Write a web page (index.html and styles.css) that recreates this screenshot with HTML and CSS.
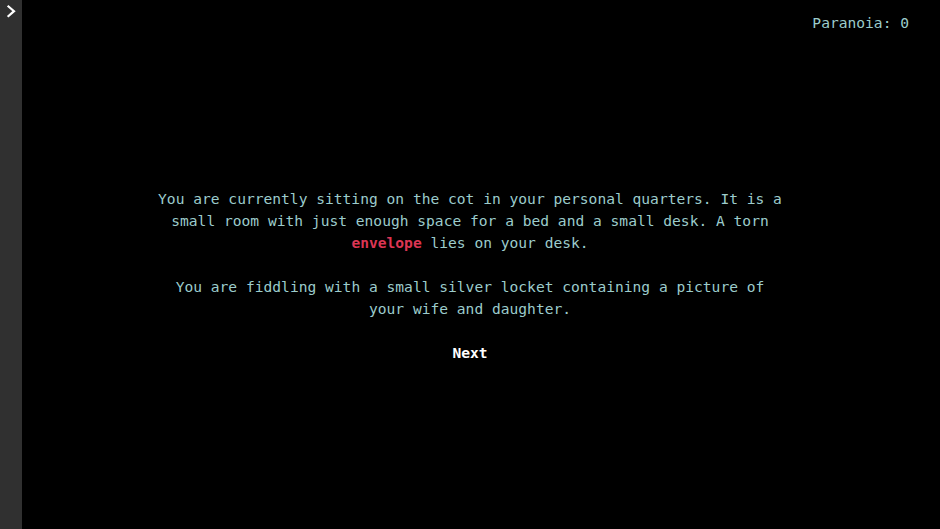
FILE: index.html
```html
<!DOCTYPE html>
<html>
<head>
<meta charset="utf-8">
<link rel="stylesheet" href="styles.css">
</head>
<body>
<aside class="sidebar"><svg class="chevron" width="22" height="22" viewBox="0 0 22 22"><polyline points="8.5,6.5 14,11.2 8.5,16" fill="none" stroke="#fff" stroke-width="2.2" stroke-linecap="square"/></svg></aside>
<main class="main">
  <header class="status">Paranoia: 0</header>
  <section class="story">
    <p>You are currently sitting on the cot in your personal quarters. It is a small room with just enough space for a bed and a small desk. A torn <span class="item">envelope</span> lies on your desk.</p>
    <p>You are fiddling with a small silver locket containing a picture of your wife and daughter.</p>
    <p class="next">Next</p>
  </section>
</main>
</body>
</html>
```
FILE: styles.css
```css
html, body {
  margin: 0;
  padding: 0;
  background: #000;
  height: 100%;
}
body {
  font-family: "DejaVu Sans Mono", "Liberation Mono", monospace;
  font-size: 14.6px;
  line-height: 22px;
  color: #9ccccc;
}
.sidebar {
  position: fixed;
  left: 0;
  top: 0;
  bottom: 0;
  width: 22px;
  background: #303030;
}
.chevron {
  display: block;
}
.main {
  display: flex;
  flex-direction: column;
  align-items: center;
}
.status {
  align-self: stretch;
  display: flex;
  justify-content: flex-end;
  padding: 12px 31px 0 0;
  height: 22px;
}
.story {
  width: 629px;
  margin-top: 154px;
  text-align: center;
}
.story p {
  margin: 0 0 22px;
}
.item {
  color: #dc3553;
  font-weight: bold;
}
.next {
  color: #fff;
  font-weight: bold;
}
```
